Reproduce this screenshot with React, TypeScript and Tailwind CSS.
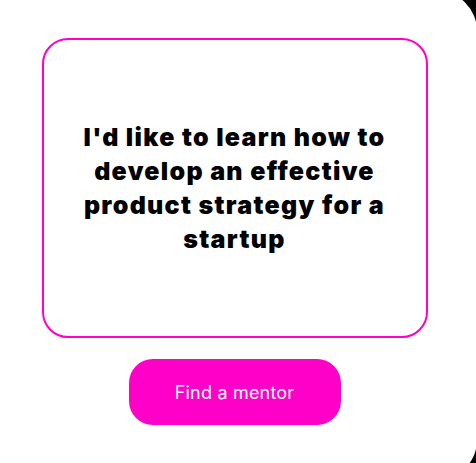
import React from 'react';

export default function App() {
  return (
    <div className="h-[463px] w-full overflow-hidden bg-black">
      {/* white sheet, only its right corners peek out */}
      <div className="-mt-[9px] h-[489px] w-[477px] rounded-r-[40px] bg-white pt-[47px]">
        <div className="flex w-[469px] flex-col items-center">
          <div className="flex h-[300px] w-[386px] items-center justify-center rounded-[26px] border-2 border-[#ff00c8] px-3">
            <p className="text-center font-['Inter',sans-serif] text-[25px] leading-[34px] font-black tracking-[1.3px] text-black">
              I'd like to learn how to develop an effective product strategy for a startup
            </p>
          </div>
          <button className="mt-[21px] flex h-[66px] w-[212px] items-center justify-center rounded-[24px] bg-[#ff00c8] font-['Inter',sans-serif] text-[18px] font-normal tracking-[0.2px] text-white">
            Find a mentor
          </button>
        </div>
      </div>
    </div>
  );
}
